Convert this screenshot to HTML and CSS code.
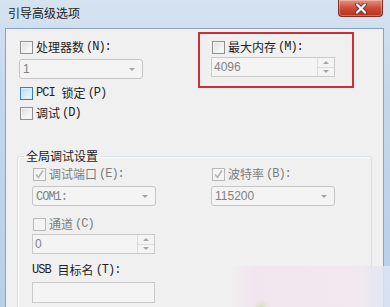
FILE: index.html
```html
<!DOCTYPE html>
<html lang="zh-CN">
<head>
    <meta charset="UTF-8">
    <meta name="viewport" content="width=device-width, initial-scale=1.0">
    <title>引导高级选项</title>
    <link rel="stylesheet" href="styles.css">
</head>
<body>
    <div class="window">
        <div class="titlebar">
            <span class="title">引导高级选项</span>
            <span class="close">
                <svg width="14" height="11" viewBox="0 0 14 11">
                    <path d="M3 1.5 L11 9.5 M11 1.5 L3 9.5" stroke="#6b3a33" stroke-width="4" stroke-linecap="round"/>
                    <path d="M3 1.5 L11 9.5 M11 1.5 L3 9.5" stroke="#ffffff" stroke-width="2.2" stroke-linecap="round"/>
                </svg>
            </span>
        </div>

        <div class="client">
            <div class="top">
                <div class="col-left">
                    <label class="check"><span class="cb"></span>处理器数<span class="key">(N):</span></label>
                    <div class="select sel-first"><span>1</span><i class="arrow"></i></div>
                    <label class="check pci"><span class="cb cb-hot"></span><span class="key lead">PCI</span>锁定<span class="key">(P)</span></label>
                    <label class="check debug"><span class="cb"></span>调试<span class="key">(D)</span></label>
                </div>

                <div class="highlight">
                    <label class="check"><span class="cb"></span>最大内存<span class="key">(M):</span></label>
                    <div class="spin spin-mem">
                        <span>4096</span>
                        <span class="spin-btns"><i class="up"></i><i class="down"></i></span>
                    </div>
                </div>
            </div>

            <fieldset class="group">
                <legend>全局调试设置</legend>
                <div class="group-row">
                    <div class="field">
                        <label class="check disabled"><span class="cb cb-checked"><svg width="11" height="11" viewBox="0 0 11 11"><path d="M2 5.5 L4.5 8.5 L9 1.5" fill="none" stroke="#b4b4b4" stroke-width="1.6"/></svg></span>调试端口<span class="key">(E):</span></label>
                        <div class="select sel-group"><span class="key">COM1:</span><i class="arrow"></i></div>
                    </div>
                    <div class="field">
                        <label class="check disabled"><span class="cb cb-checked"><svg width="11" height="11" viewBox="0 0 11 11"><path d="M2 5.5 L4.5 8.5 L9 1.5" fill="none" stroke="#b4b4b4" stroke-width="1.6"/></svg></span>波特率<span class="key">(B):</span></label>
                        <div class="select sel-group"><span>115200</span><i class="arrow"></i></div>
                    </div>
                </div>

                <div class="field">
                    <label class="check disabled channel"><span class="cb cb-off"></span>通道<span class="key">(C)</span></label>
                    <div class="spin spin-channel">
                        <span>0</span>
                        <span class="spin-btns"><i class="up"></i><i class="down"></i></span>
                    </div>
                    <div class="plain-label"><span class="key lead">USB</span>目标名<span class="key">(T):</span></div>
                    <div class="textbox"></div>
                </div>
            </fieldset>
        </div>

        <div class="watermark"></div>
    </div>
</body>
</html>
```

FILE: styles.css
```css
body {
    margin: 0;
    padding: 0;
    font-family: "Noto Sans CJK SC", sans-serif;
    font-size: 12px;
    overflow: hidden;
}

.window {
    position: relative;
    width: 390px;
    height: 307px;
    display: flex;
    flex-direction: column;
    background: linear-gradient(to bottom, #d6e3f1, #c4d7ec 30%, #b8cfe9);
    overflow: hidden;
}

.titlebar {
    height: 28px;
    display: flex;
    justify-content: space-between;
    align-items: flex-start;
    flex-shrink: 0;
}

.title {
    padding: 5px 0 0 8px;
    line-height: 16px;
    color: #1b1b1b;
}

.close {
    width: 45px;
    height: 17px;
    margin-right: 7px;
    box-sizing: border-box;
    border: 1px solid #7d2f25;
    border-top: none;
    border-radius: 0 0 4px 4px;
    background: linear-gradient(to bottom, #e39280, #cf4d37 50%, #b8301c);
    box-shadow: inset 0 0 0 1px rgba(255, 255, 255, 0.3);
    display: flex;
    justify-content: center;
    align-items: center;
}

.client {
    flex: 1;
    margin: 0 6px 0 5px;
    border: 1px solid #8ba3bd;
    border-bottom: none;
    background-color: #f0f0f0;
    overflow: hidden;
}

.key {
    font-family: "Liberation Mono", monospace;
    letter-spacing: -1px;
    margin-left: 2px;
}

.key.lead {
    margin: 0 7px 0 0;
}

/* checkbox rows */
.check {
    display: flex;
    align-items: center;
    height: 14px;
    line-height: 14px;
    color: #1e1e1e;
    white-space: nowrap;
}

.cb {
    width: 13px;
    height: 13px;
    box-sizing: border-box;
    margin: 0 3px 0 1px;
    border: 1px solid #8e8f8f;
    background: linear-gradient(135deg, #dcdcdc, #f6f6f6 70%);
    box-shadow: inset 0 0 0 1px #f4f4f4;
    display: flex;
    align-items: center;
    justify-content: center;
    flex-shrink: 0;
}

.cb-hot {
    border-color: #3c7fb1;
    background: linear-gradient(135deg, #b4dcf5, #e0f2fd 70%);
    box-shadow: inset 0 0 0 1px #d8eefc;
}

.cb-checked,
.cb-off {
    border-color: #b8b8b8;
    background: #f4f4f4;
    box-shadow: none;
}

.disabled {
    color: #7c7c7c;
}

/* top area */
.top {
    display: flex;
    align-items: flex-start;
    margin-top: 3px;
}

.col-left {
    width: 124px;
    margin: 8px 0 0 13px;
}

.pci {
    margin-top: 7px;
}

.debug {
    margin-top: 6px;
}

.highlight {
    width: 156px;
    height: 56px;
    box-sizing: border-box;
    margin-left: 55px;
    padding: 6px 0 0 11px;
    border: 2px solid #cf2f34;
}

/* combo boxes */
.select {
    position: relative;
    height: 20px;
    box-sizing: border-box;
    border: 1px solid #c5c5c5;
    border-radius: 3px;
    background-color: #f4f4f4;
    padding-left: 3px;
    line-height: 18px;
    color: #808080;
    font-family: "Liberation Sans", sans-serif;
    font-size: 12px;
}

.select .key {
    margin-left: 0;
}

.sel-first {
    width: 124px;
    margin-top: 5px;
}

.sel-group {
    width: 124px;
    margin-top: 5px;
}

.arrow {
    position: absolute;
    right: 7px;
    top: 8px;
    width: 0;
    height: 0;
    border-left: 3px solid transparent;
    border-right: 3px solid transparent;
    border-top: 3px solid #a3a3a3;
}

/* spin boxes */
.spin {
    display: flex;
    justify-content: space-between;
    width: 124px;
    height: 20px;
    box-sizing: border-box;
    border: 1px solid #c9c9c9;
    background-color: #f4f4f4;
    padding-left: 2px;
    line-height: 18px;
    color: #838383;
    font-family: "Liberation Sans", sans-serif;
}

.spin-mem {
    margin-top: 3px;
}

.spin-channel {
    width: 123px;
    margin-top: 3px;
}

.spin-btns {
    width: 16px;
    display: flex;
    flex-direction: column;
    border-left: 1px solid #dcdcdc;
}

.spin-btns i {
    flex: 1;
    display: flex;
    align-items: center;
    justify-content: center;
}

.spin-btns .up {
    border-bottom: 1px solid #dcdcdc;
}

.spin-btns .up::before,
.spin-btns .down::before {
    content: "";
    width: 0;
    height: 0;
    border-left: 3px solid transparent;
    border-right: 3px solid transparent;
}

.spin-btns .up::before {
    border-bottom: 3px solid #a5a5a5;
}

.spin-btns .down::before {
    border-top: 3px solid #a5a5a5;
}

/* group box */
.group {
    width: 355px;
    box-sizing: border-box;
    margin: 28px 0 0 11px;
    padding: 3px 0 40px 14px;
    border: 1px solid #d5dfe5;
    border-radius: 3px;
    box-shadow: inset 1px 1px 0 #ffffff;
    min-width: 0;
}

.group legend {
    margin-left: -8px;
    padding: 0 2px;
    line-height: 16px;
    color: #1b1b1b;
}

.group-row {
    display: flex;
    gap: 55px;
}

.field {
    width: 124px;
}

.channel {
    margin-top: 11px;
}

.plain-label {
    display: flex;
    margin-top: 9px;
    height: 14px;
    line-height: 14px;
    color: #1e1e1e;
    white-space: nowrap;
}

.textbox {
    width: 123px;
    height: 21px;
    box-sizing: border-box;
    margin-top: 5px;
    border: 1px solid #c9c9c9;
    background-color: #f4f4f4;
}

/* faded picture in the corner */
.watermark {
    position: absolute;
    left: 230px;
    top: 266px;
    width: 160px;
    height: 41px;
    background:
        radial-gradient(circle at 32px 44px, rgba(150, 205, 70, 0.55) 0, rgba(170, 215, 100, 0.2) 5px, rgba(255, 255, 255, 0) 10px),
        linear-gradient(to right, rgba(240, 228, 238, 0), rgba(240, 228, 238, 0.85) 15%, rgba(242, 232, 240, 0.85) 80%, rgba(220, 228, 242, 0.85));
    pointer-events: none;
}
```
